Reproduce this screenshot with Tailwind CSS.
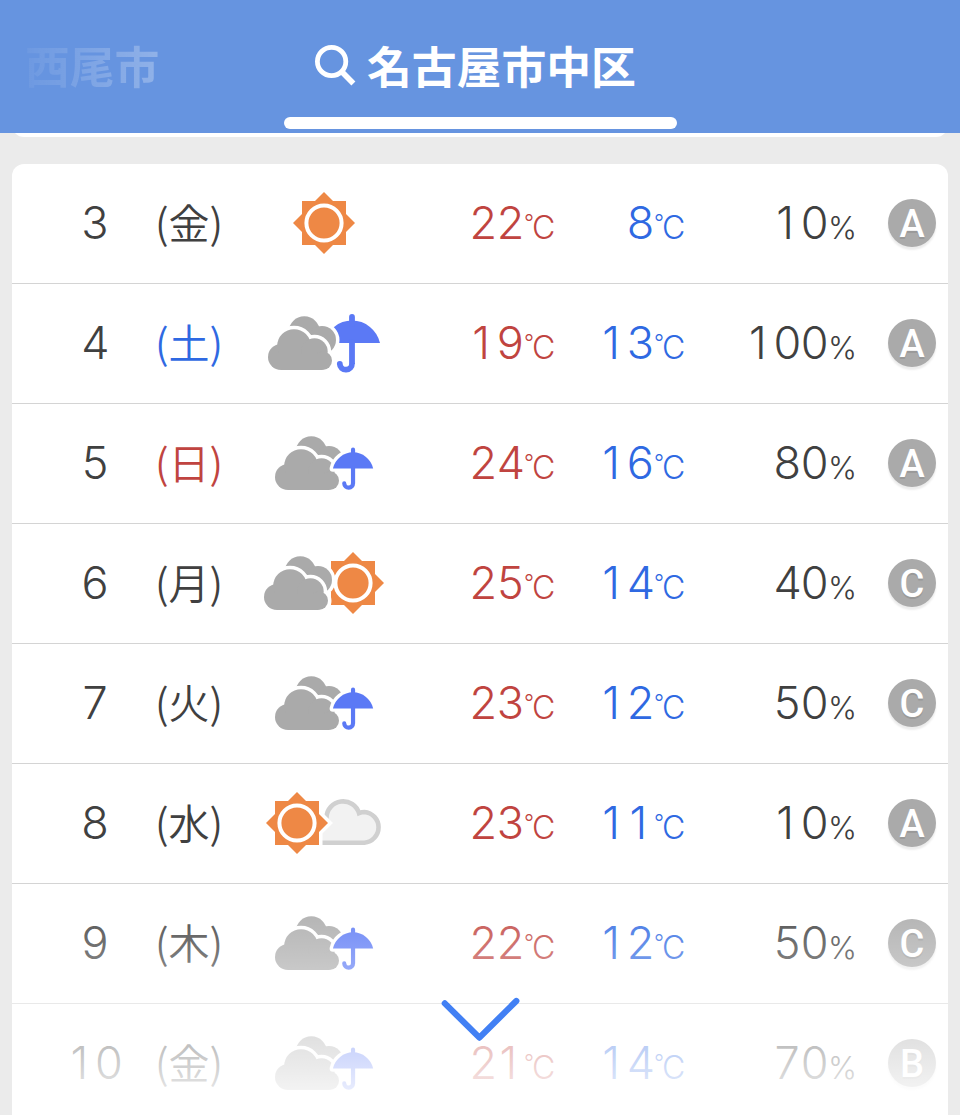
<!DOCTYPE html>
<html lang="ja">

<head>
    <meta charset="UTF-8">
    <meta name="viewport" content="width=device-width, initial-scale=1.0">
    <title>週間天気</title>
    <script src="https://cdn.jsdelivr.net/npm/@tailwindcss/browser@4"></script>
</head>

<body class="bg-[#ebebeb] h-[1115px] overflow-hidden font-['Inter','Noto_Sans_CJK_JP',sans-serif]">
    <!-- weather icons -->
    <svg class="hidden">
        <defs>
            <symbol id="sun" viewBox="0 0 70 70" overflow="visible">
                <path d="M13 13H57V57H13ZM35 4L66 35L35 66L4 35Z" fill="#fff" stroke="#fff" stroke-width="7" />
                <path d="M13 13H57V57H13Z" fill="#ee8845" />
                <path d="M35 4L66 35L35 66L4 35Z" fill="#ee8845" />
                <circle cx="35" cy="35" r="17.6" fill="none" stroke="#fff" stroke-width="4" />
            </symbol>
            <g id="back">
                <circle cx="54.3" cy="48" r="15.7" />
                <circle cx="72" cy="56" r="14" />
            </g>
            <g id="front">
                <circle cx="31" cy="73" r="13" />
                <circle cx="44" cy="62" r="16.8" />
                <circle cx="64.5" cy="67.5" r="13.2" />
                <circle cx="72.7" cy="76.7" r="9.3" />
                <path d="M31 70H72V86H31Z" />
            </g>
            <g id="clouds" fill="#aaa">
                <use href="#back" stroke="#fff" stroke-width="7" />
                <use href="#back" />
                <use href="#front" stroke="#fff" stroke-width="7" />
                <use href="#front" />
            </g>
            <g id="canopy">
                <path d="M74 59A28.7 28.7 0 0 1 130 59Z" />
            </g>
            <g id="umbrella">
                <use href="#canopy" fill="#5b79f5" />
                <path d="M102 40V32.9M102 58V79.4A6.1 6.1 0 0 1 89.8 79.8" fill="none" stroke="#5b79f5" stroke-width="5.8" stroke-linecap="round" />
            </g>
            <g id="cloud-white">
                <path d="M56 78.7H114.4A15.4 15.4 0 0 0 114.4 48Q112 48 109 49.2A16.6 16.6 0 0 0 76.5 53.5Z" fill="#f2f2f2" stroke="#d0d0d0" stroke-width="4.6" />
            </g>
        </defs>
    </svg>

    <header class="relative z-10 h-[133px] bg-[#6694e0] text-[44.8px] font-bold leading-[66px] text-white font-['Noto_Sans_CJK_JP',sans-serif]">
        <div class="absolute left-[25px] top-[32px] bg-gradient-to-r from-white/5 to-white/28 bg-clip-text text-transparent">西尾市</div>
        <div class="mx-auto flex h-[117px] w-[393px] items-start pt-[32px] pl-[30px]">
            <svg class="mt-[12px] h-[44px] w-[44px]" viewBox="0 0 44 44" fill="none" stroke="#fff">
                <circle cx="17.6" cy="17.5" r="14.2" stroke-width="4.8" />
                <path d="M27.6 27.5L39.4 39.5" stroke-width="5.6" />
            </svg>
            <h1 class="ml-[9.5px] whitespace-nowrap">名古屋市中区</h1>
        </div>
        <div class="mx-auto h-[12px] w-[393px] rounded-full bg-white"></div>
    </header>

    <main class="px-3">
        <div class="-mt-7 h-8 rounded-xl bg-white"></div>
        <div class="relative mt-[27px] h-[970px] rounded-t-xl bg-white">
            <div id="rows"></div>
            <div class="absolute inset-x-0 top-[720px] h-[240px] bg-gradient-to-b from-white/0 to-white"></div>
        </div>
    </main>

    <svg class="absolute left-[440px] top-[995px] z-20 h-[50px] w-[82px]" viewBox="0 0 82 50" fill="none">
        <path d="M4.8 8.4L39.4 42.6L76.3 6" stroke="#4280f4" stroke-width="6.2" stroke-linecap="round" stroke-linejoin="round" />
    </svg>

    <script>
        const clouds = x => `<use href="#clouds" x="${x}" />`;
        const smallUmbrella = `
            <g transform="translate(29.6 22) scale(.72)">
                <use href="#canopy" fill="#fff" stroke="#fff" stroke-width="9" stroke-linejoin="round" />
                <use href="#umbrella" />
            </g>`;

        const icons = {
            sunny: '<use href="#sun" x="39" y="24" width="70" height="70" />',
            cloudyRain: '<use href="#umbrella" />' + clouds(0),
            cloudySomeRain: clouds(7) + smallUmbrella,
            cloudySun: '<use href="#sun" x="68" y="24" width="70" height="70" />' + clouds(-4),
            sunCloudy: '<use href="#cloud-white" /><use href="#sun" x="12" y="24" width="70" height="70" />'
        };

        const days = [
            { date: 3, day: '金', icon: 'sunny', high: 22, low: 8, rain: 10, rank: 'A' },
            { date: 4, day: '土', icon: 'cloudyRain', high: 19, low: 13, rain: 100, rank: 'A' },
            { date: 5, day: '日', icon: 'cloudySomeRain', high: 24, low: 16, rain: 80, rank: 'A' },
            { date: 6, day: '月', icon: 'cloudySun', high: 25, low: 14, rain: 40, rank: 'C' },
            { date: 7, day: '火', icon: 'cloudySomeRain', high: 23, low: 12, rain: 50, rank: 'C' },
            { date: 8, day: '水', icon: 'sunCloudy', high: 23, low: 11, rain: 10, rank: 'A' },
            { date: 9, day: '木', icon: 'cloudySomeRain', high: 22, low: 12, rain: 50, rank: 'C' },
            { date: 10, day: '金', icon: 'cloudySomeRain', high: 21, low: 14, rain: 70, rank: 'B' }
        ];

        const dayColors = { '土': 'text-[#2f69e2]', '日': 'text-[#c04440]' };

        // every digit gets a cell of the same width
        const digits = n => String(n).split('').map(c =>
            `<span class="inline-block w-[27.3px] text-center ${c === '1' ? 'pr-[4px]' : ''}">${c}</span>`).join('');

        const celsius = '<span class="inline-block w-[8px] align-[9px] text-[22px] leading-none">°</span><span class="inline-block w-[22px] text-right text-[32px] leading-none">C</span>';

        document.getElementById('rows').innerHTML = days.map(d => `
            <div class="grid h-[120px] grid-cols-[43px_80px_115px_140px_164px_130px_171px_80px] items-center border-b border-[#d4d4d4] text-[45px] font-[350] leading-[60px] text-[#404040] whitespace-nowrap">
                <div class="col-start-2 -mt-px text-center">${digits(d.date)}</div>
                <div class="-mt-[5px] flex justify-center pr-[7px] text-[41px] font-['Noto_Sans_CJK_JP',sans-serif] ${dayColors[d.day] || ''}">
                    <span>(</span><span>${d.day}</span><span>)</span>
                </div>
                <svg class="h-[119px] w-[140px]" viewBox="0 0 140 119">${icons[d.icon]}</svg>
                <div class="-mt-px text-right text-[#c04440]">${digits(d.high)}${celsius}</div>
                <div class="-mt-px text-right text-[#2f69e2]">${digits(d.low)}${celsius}</div>
                <div class="-mt-px text-right">${digits(d.rain)}<span class="inline-block w-[27px] text-right text-[31px] leading-none">%</span></div>
                <div class="-mt-px ml-[33px] h-12 w-12 rounded-full bg-[#aaa] text-center text-[38px] font-medium leading-[50px] text-white shadow-[0_3px_2px_#ececec] text-shadow-[0_2px_0_#999] font-['Roboto',sans-serif]">${d.rank}</div>
            </div>
        `).join('');
    </script>
</body>

</html>
